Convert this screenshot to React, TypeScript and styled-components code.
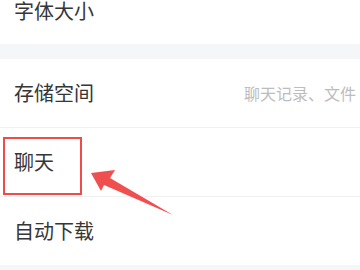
import React from "react";
import styled, { createGlobalStyle } from "styled-components";

const GlobalStyle = createGlobalStyle`
  html, body {
    margin: 0;
    padding: 0;
    background: #f5f6f8;
  }
  body {
    font-family: "Noto Sans CJK SC", "Noto Sans", sans-serif;
  }
`;

const Page = styled.div`
  position: relative;
  width: 360px;
  height: 270px;
  overflow: hidden;
  background: #f5f6f8;
`;

const Section = styled.div`
  background: #fff;
`;

const Gap = styled.div`
  height: 15px;
  background: #f5f6f8;
`;

const Row = styled.div<{ $cut?: boolean }>`
  display: flex;
  align-items: ${(p) => (p.$cut ? "flex-start" : "center")};
  height: ${(p) => (p.$cut ? 44 : 68)}px;
  padding: 0 4px 0 14px;
  border-bottom: 1px solid #f0f0f0;
  &:last-child {
    border-bottom: none;
  }
`;

const Label = styled.span`
  font-size: 20px;
  line-height: 22px;
  color: #363636;
  white-space: nowrap;
`;

const Hint = styled.span`
  margin-left: auto;
  font-size: 16px;
  color: #bdbdbd;
  white-space: nowrap;
`;

const MarkBox = styled.div`
  position: absolute;
  left: 3px;
  top: 137px;
  width: 79px;
  height: 58px;
  box-sizing: border-box;
  border: 2.5px solid #ef4b4b;
`;

const Arrow = styled.svg`
  position: absolute;
  left: 0;
  top: 0;
`;

const App: React.FC = () => {
  return (
    <Page>
      <GlobalStyle />
      <Section>
        <Row $cut>
          <Label>字体大小</Label>
        </Row>
      </Section>
      <Gap />
      <Section>
        <Row>
          <Label>存储空间</Label>
          <Hint>聊天记录、文件</Hint>
        </Row>
        <Row>
          <Label>聊天</Label>
        </Row>
        <Row>
          <Label>自动下载</Label>
        </Row>
      </Section>
      <MarkBox />
      <Arrow width="360" height="270" viewBox="0 0 360 270">
        <polygon
          points="91,173 115,170 110,178 173,215 104,185 101,191"
          fill="#f04f4f"
        />
      </Arrow>
    </Page>
  );
};

export default App;
